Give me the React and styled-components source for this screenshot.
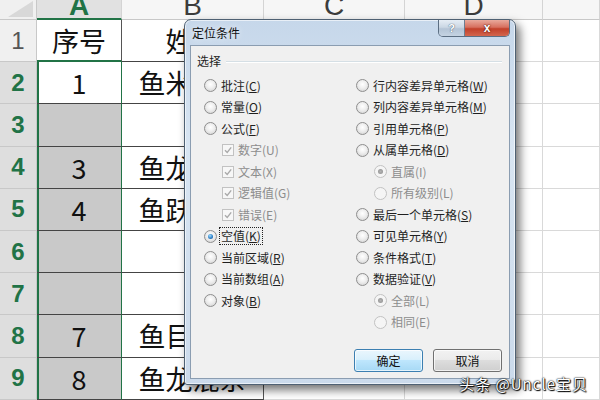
import React from "react";
import styled, { createGlobalStyle, css } from "styled-components";

const GREEN = "#217346";

const GlobalStyle = createGlobalStyle`
  html, body { margin: 0; padding: 0; background: #fff; }
  body { font-family: "Noto Sans CJK SC", "Liberation Sans", sans-serif; }
`;

const Screen = styled.div`
  position: relative;
  width: 600px;
  height: 400px;
  overflow: hidden;
  background: #fff;
`;

// ---- spreadsheet ----
const Sheet = styled.div`
  display: grid;
  grid-template-columns: 37px 85px 142px 141px 138px 57px;
  grid-template-rows: 20px repeat(9, 42.2px);
`;

const Corner = styled.div`
  position: relative;
  background: #f0f0f0;
  border-right: 1px solid #c8c8c8;
  border-bottom: 1px solid #c8c8c8;
  &::after {
    content: "";
    position: absolute;
    right: 3px;
    bottom: 2px;
    border-style: solid;
    border-width: 0 0 16px 25px;
    border-color: transparent transparent #d8d8d8 transparent;
  }
`;

const ColHead = styled.div`
  overflow: hidden;
  display: flex;
  justify-content: center;
  background: ${(p) => (p.$active ? "#e1e1e1" : "#f6f6f6")};
  color: ${(p) => (p.$active ? GREEN : "#3c3c3c")};
  font: ${(p) => (p.$active ? 700 : 400)} 28px/11px "Liberation Sans", sans-serif;
  border-right: 1px solid #d4d4d4;
  border-bottom: ${(p) => (p.$active ? `2px solid ${GREEN}` : "1px solid #c8c8c8")};
`;

const RowHead = styled.div`
  display: flex;
  align-items: center;
  justify-content: center;
  background: ${(p) => (p.$active ? "#dedede" : "#f0f0f0")};
  color: ${(p) => (p.$active ? GREEN : "#555")};
  font: ${(p) => (p.$active ? 700 : 400)} 24px "Liberation Sans", sans-serif;
  border-right: 1px solid #c8c8c8;
  border-bottom: 1px solid #c8c8c8;
`;

const Cell = styled.div`
  display: flex;
  align-items: center;
  justify-content: center;
  overflow: hidden;
  white-space: nowrap;
  font-size: 27px;
  color: #111;
  background: ${(p) => (p.$shade ? "#c9c9c9" : "#fff")};
  border-right: 1px solid ${(p) => (p.$sel ? GREEN : p.$table ? "#555" : "#d9d9d9")};
  border-bottom: ${(p) =>
    p.$greenBottom ? `2px solid ${GREEN}` : `1px solid ${p.$table ? "#444" : "#d9d9d9"}`};
  ${(p) =>
    p.$sel &&
    css`
      box-shadow: inset 2px 0 0 ${GREEN};
    `}
`;

// ---- dialog ----
const Dialog = styled.div`
  position: absolute;
  left: 184px;
  top: 19px;
  width: 332px;
  height: 366px;
  box-sizing: border-box;
  display: flex;
  flex-direction: column;
  padding: 0 5px 5px 5px;
  border: 1px solid #4f6173;
  border-radius: 7px 7px 3px 3px;
  background: linear-gradient(180deg, #c6d7ea 0%, #d8e5f2 35%, #cbdaeb 100%);
  box-shadow: inset 0 0 0 1px rgba(255, 255, 255, 0.6), 4px 5px 10px rgba(0, 0, 0, 0.55);
  font: 12px "Noto Sans CJK SC", "Liberation Sans", sans-serif;
  color: #1f1f1f;
`;

const TitleBar = styled.div`
  height: 25px;
  display: flex;
  align-items: flex-start;
`;

const Title = styled.span`
  align-self: center;
  padding-left: 2px;
  color: #111;
  text-shadow: 0 0 6px rgba(255, 255, 255, 0.9);
`;

const Caption = styled.div`
  margin-left: auto;
  display: flex;
  border: 1px solid #5c6e82;
  border-top: none;
  border-radius: 0 0 5px 5px;
  overflow: hidden;
`;

const CapBtn = styled.div`
  width: ${(p) => (p.$close ? 44 : 25)}px;
  height: 16px;
  display: flex;
  align-items: center;
  justify-content: center;
  font: 700 ${(p) => (p.$close ? 12 : 11)}px "Liberation Sans", sans-serif;
  color: #fff;
  background: ${(p) =>
    p.$close
      ? "linear-gradient(180deg, #e9a99c 0%, #d7705f 45%, #c2402a 55%, #d3664e 100%)"
      : "linear-gradient(180deg, #e6edf5 0%, #cbd7e4 45%, #b4c4d6 55%, #c5d3e2 100%)"};
  text-shadow: ${(p) =>
    p.$close ? "0 0 2px #5a1408, 0 0 1px #5a1408" : "0 0 1px #52657b, 0 0 1px #52657b"};
  & + & {
    border-left: 1px solid #6c7e92;
  }
`;

const Body = styled.div`
  flex: 1;
  display: flex;
  flex-direction: column;
  background: #f0f0f0;
  border: 1px solid #8b9db1;
  padding: 7px 7px 6px 6px;
`;

const GroupHead = styled.div`
  display: flex;
  align-items: center;
  height: 14px;
`;

const GroupLine = styled.div`
  flex: 1;
  margin: 3px 0 0 5px;
  border-top: 1px solid #d5dfe5;
  border-bottom: 1px solid #fff;
`;

const Options = styled.div`
  display: grid;
  grid-template-columns: 152px 1fr;
  margin-top: 8px;
  padding-left: 7px;
`;

const Column = styled.div`
  display: flex;
  flex-direction: column;
`;

const Option = styled.div`
  height: 21.5px;
  display: flex;
  align-items: center;
  padding-left: ${(p) => (p.$indent ? 18 : 0)}px;
`;

const Radio = styled.span`
  flex: none;
  box-sizing: border-box;
  width: 13px;
  height: 13px;
  margin-right: 4px;
  border-radius: 50%;
  display: flex;
  align-items: center;
  justify-content: center;
  border: 1px solid ${(p) => (p.$disabled ? "#c2c2c2" : "#8e8e8e")};
  background: ${(p) =>
    p.$disabled
      ? "#f5f5f5"
      : "radial-gradient(circle at 50% 40%, #ffffff 0%, #eeeeee 45%, #cdcdcd 100%)"};
  &::after {
    content: "";
    display: ${(p) => (p.$checked ? "block" : "none")};
    width: 5px;
    height: 5px;
    border-radius: 50%;
    background: ${(p) =>
      p.$disabled
        ? "radial-gradient(circle, #b4b4b4, #8c8c8c)"
        : "radial-gradient(circle at 40% 35%, #9fdcff, #2a7cc4 60%, #0d4a86)"};
  }
`;

const Check = styled.span`
  flex: none;
  box-sizing: border-box;
  width: 12px;
  height: 12px;
  margin-right: 4px;
  border: 1px solid #c2c2c2;
  background: #f7f7f7;
  display: flex;
  align-items: center;
  justify-content: center;
`;

const Label = styled.span`
  white-space: nowrap;
  color: ${(p) => (p.$disabled ? "#8d8d8d" : "#1f1f1f")};
  line-height: 16px;
  ${(p) =>
    p.$focus &&
    css`
      outline: 1px dotted #222;
      outline-offset: 0;
      padding: 0 1px;
      margin-left: -1px;
    `}
`;

const Buttons = styled.div`
  margin-top: auto;
  display: flex;
  justify-content: flex-end;
  gap: 10px;
`;

const Button = styled.div`
  box-sizing: border-box;
  width: 69px;
  height: 23px;
  display: flex;
  align-items: center;
  justify-content: center;
  border-radius: 3px;
  border: 1px solid ${(p) => (p.$default ? "#3c7fb1" : "#707070")};
  background: ${(p) =>
    p.$default
      ? "linear-gradient(180deg, #eaf6fd 0%, #d9f0fc 45%, #bee6fd 50%, #a7d9f5 100%)"
      : "linear-gradient(180deg, #f2f2f2 0%, #ebebeb 45%, #dddddd 50%, #cfcfcf 100%)"};
  box-shadow: inset 0 0 0 1px rgba(255, 255, 255, 0.7);
  color: #111;
`;

const Watermark = styled.div`
  position: absolute;
  right: 12px;
  top: 373px;
  font-size: 15px;
  letter-spacing: 1px;
  color: #fff;
  white-space: nowrap;
  text-shadow: 0 0 2px #000, 1px 1px 1px #000, 0 0 1px #000;
`;

const rows = [
  { n: 1, a: "序号", b: "姓名" },
  { n: 2, a: "1", b: "鱼米之乡" },
  { n: 3, a: "", b: "" },
  { n: 4, a: "3", b: "鱼龙百变" },
  { n: 5, a: "4", b: "鱼跃龙门" },
  { n: 6, a: "", b: "" },
  { n: 7, a: "", b: "" },
  { n: 8, a: "7", b: "鱼目混珠" },
  { n: 9, a: "8", b: "鱼龙混杂" },
];

const leftOptions = [
  { t: "批注", k: "C" },
  { t: "常量", k: "O" },
  { t: "公式", k: "F" },
  { t: "数字", k: "U", box: true },
  { t: "文本", k: "X", box: true },
  { t: "逻辑值", k: "G", box: true },
  { t: "错误", k: "E", box: true },
  { t: "空值", k: "K", checked: true, focus: true },
  { t: "当前区域", k: "R" },
  { t: "当前数组", k: "A" },
  { t: "对象", k: "B" },
];

const rightOptions = [
  { t: "行内容差异单元格", k: "W" },
  { t: "列内容差异单元格", k: "M" },
  { t: "引用单元格", k: "P" },
  { t: "从属单元格", k: "D" },
  { t: "直属", k: "I", sub: true, checked: true },
  { t: "所有级别", k: "L", sub: true },
  { t: "最后一个单元格", k: "S" },
  { t: "可见单元格", k: "Y" },
  { t: "条件格式", k: "T" },
  { t: "数据验证", k: "V" },
  { t: "全部", k: "L", sub: true, checked: true },
  { t: "相同", k: "E", sub: true },
];

const CheckMark = () => (
  <svg width="10" height="10" viewBox="0 0 10 10">
    <path d="M2 5.2 L4.2 7.4 L8.2 2.4" fill="none" stroke="#a9a9a9" strokeWidth="1.4" />
  </svg>
);

const OptionRow = ({ o }) => {
  const disabled = o.box || o.sub;
  return (
    <Option $indent={disabled}>
      {o.box ? (
        <Check>
          <CheckMark />
        </Check>
      ) : (
        <Radio $checked={o.checked} $disabled={disabled} />
      )}
      <Label $disabled={disabled} $focus={o.focus}>
        {o.t}(
        {disabled ? o.k : <u>{o.k}</u>})
      </Label>
    </Option>
  );
};

const App = () => {
  return (
    <Screen>
      <GlobalStyle />
      <Sheet>
        <Corner />
        <ColHead $active>A</ColHead>
        <ColHead>B</ColHead>
        <ColHead>C</ColHead>
        <ColHead>D</ColHead>
        <ColHead />
        {rows.map((r) => (
          <React.Fragment key={r.n}>
            <RowHead $active={r.n > 1}>{r.n}</RowHead>
            <Cell $table $sel={r.n > 1} $shade={r.n > 2} $greenBottom={r.n === 1}>
              {r.a}
            </Cell>
            <Cell $table>{r.b}</Cell>
            <Cell />
            <Cell />
            <Cell />
          </React.Fragment>
        ))}
      </Sheet>

      <Dialog>
        <TitleBar>
          <Title>定位条件</Title>
          <Caption>
            <CapBtn>?</CapBtn>
            <CapBtn $close>x</CapBtn>
          </Caption>
        </TitleBar>
        <Body>
          <GroupHead>
            <span>选择</span>
            <GroupLine />
          </GroupHead>
          <Options>
            <Column>
              {leftOptions.map((o) => (
                <OptionRow key={o.t} o={o} />
              ))}
            </Column>
            <Column>
              {rightOptions.map((o) => (
                <OptionRow key={o.t} o={o} />
              ))}
            </Column>
          </Options>
          <Buttons>
            <Button $default>确定</Button>
            <Button>取消</Button>
          </Buttons>
        </Body>
      </Dialog>

      <Watermark>头条 @Uncle宝贝</Watermark>
    </Screen>
  );
};

export default App;
